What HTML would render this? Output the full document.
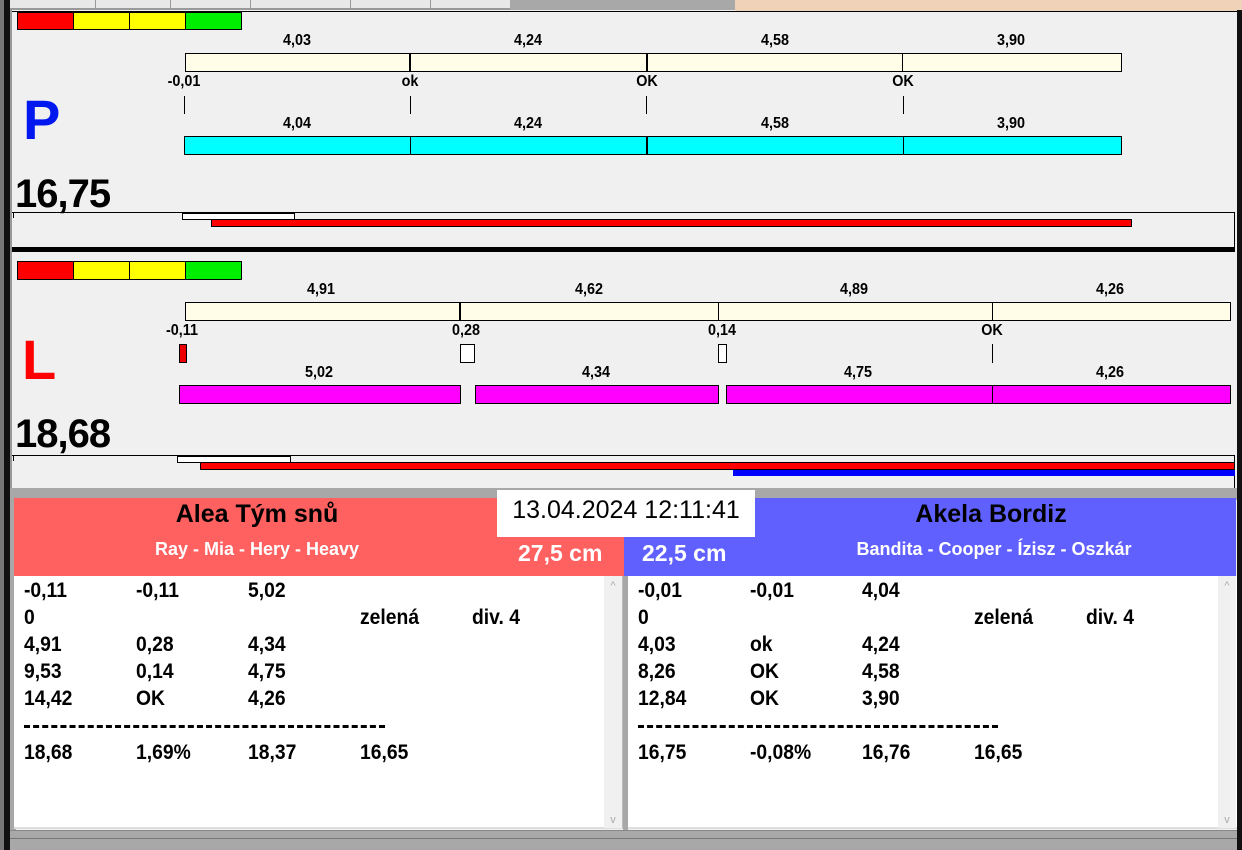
<!DOCTYPE html>
<html><head><meta charset="utf-8"><style>
*{margin:0;padding:0;box-sizing:border-box}
body{width:1242px;height:850px;overflow:hidden;background:#f0f0f0;position:relative;font-family:"Liberation Sans",Arial,sans-serif;font-weight:bold}
.a{position:absolute}
.lb{position:absolute;font-size:16px;transform:translateX(-50%) scaleX(0.9);white-space:nowrap;line-height:15px}
.bx{position:absolute;border:1px solid #000}
.t{position:absolute;font-size:21px;line-height:24px;white-space:nowrap;transform:scaleX(0.92);transform-origin:0 0}
</style></head><body>
<div class="a" style="left:0;top:0;width:510px;height:10px;background:#e8e8e8;border-bottom:2px solid #999"></div>
<div class="a" style="left:95px;top:0;width:1px;height:8px;background:#999"></div>
<div class="a" style="left:170px;top:0;width:1px;height:8px;background:#999"></div>
<div class="a" style="left:250px;top:0;width:1px;height:8px;background:#999"></div>
<div class="a" style="left:350px;top:0;width:1px;height:8px;background:#999"></div>
<div class="a" style="left:430px;top:0;width:1px;height:8px;background:#999"></div>
<div class="a" style="left:510px;top:0;width:225px;height:10px;background:#a8a8a8"></div>
<div class="a" style="left:735px;top:0;width:507px;height:12px;background:#f0d2b8"></div>
<div class="a" style="left:0;top:0;width:4px;height:850px;background:#777"></div>
<div class="a" style="left:4px;top:0;width:6px;height:850px;background:#111"></div>
<div class="a" style="left:10px;top:10px;width:2px;height:480px;background:#999"></div>
<div class="a" style="left:1237px;top:10px;width:5px;height:840px;background:#111"></div>

<div class="a" style="left:12px;top:11px;width:1225px;height:1px;background:#000"></div>
<div class="bx" style="left:17px;top:12px;width:57px;height:18px;background:#f00"></div>
<div class="bx" style="left:73px;top:12px;width:57px;height:18px;background:#ff0"></div>
<div class="bx" style="left:129px;top:12px;width:57px;height:18px;background:#ff0"></div>
<div class="bx" style="left:185px;top:12px;width:57px;height:18px;background:#0e0"></div>

<div class="lb" style="left:297px;top:33px">4,03</div>
<div class="lb" style="left:528px;top:33px">4,24</div>
<div class="lb" style="left:775px;top:33px">4,58</div>
<div class="lb" style="left:1011px;top:33px">3,90</div>
<div class="bx" style="left:185px;top:53px;width:937px;height:19px;background:#fffde8"></div>
<div class="a" style="left:409px;top:53px;width:2px;height:19px;background:#000"></div>
<div class="a" style="left:646px;top:53px;width:2px;height:19px;background:#000"></div>
<div class="a" style="left:902px;top:53px;width:1px;height:19px;background:#000"></div>
<div class="lb" style="left:184px;top:74px">-0,01</div>
<div class="lb" style="left:410px;top:74px">ok</div>
<div class="lb" style="left:647px;top:74px">OK</div>
<div class="lb" style="left:903px;top:74px">OK</div>
<div class="a" style="left:184px;top:96px;width:1px;height:18px;background:#000"></div>
<div class="a" style="left:410px;top:96px;width:1px;height:18px;background:#000"></div>
<div class="a" style="left:646px;top:96px;width:1px;height:18px;background:#000"></div>
<div class="a" style="left:903px;top:96px;width:1px;height:18px;background:#000"></div>
<div class="lb" style="left:297px;top:116px">4,04</div>
<div class="lb" style="left:528px;top:116px">4,24</div>
<div class="lb" style="left:775px;top:116px">4,58</div>
<div class="lb" style="left:1011px;top:116px">3,90</div>
<div class="bx" style="left:184px;top:136px;width:938px;height:19px;background:#0ff"></div>
<div class="a" style="left:410px;top:136px;width:1px;height:19px;background:#000"></div>
<div class="a" style="left:646px;top:136px;width:2px;height:19px;background:#000"></div>
<div class="a" style="left:903px;top:136px;width:1px;height:19px;background:#000"></div>
<div class="a" style="left:23px;top:90px;font-size:56px;color:#0018f0;line-height:60px">P</div>
<div class="a" style="left:15px;top:172px;font-size:40px;line-height:44px;letter-spacing:-1px">16,75</div>
<div class="a" style="left:12px;top:212px;width:1223px;height:36px;border-top:1px solid #000;border-right:1px solid #000"></div>
<div class="a" style="left:13px;top:212px;width:1px;height:6px;background:#000"></div>
<div class="bx" style="left:182px;top:213px;width:113px;height:7px;background:#fff"></div>
<div class="bx" style="left:211px;top:219px;width:921px;height:8px;background:#f00"></div>
<div class="a" style="left:12px;top:247px;width:1223px;height:5px;background:#000"></div>

<div class="bx" style="left:17px;top:261px;width:57px;height:19px;background:#f00"></div>
<div class="bx" style="left:73px;top:261px;width:57px;height:19px;background:#ff0"></div>
<div class="bx" style="left:129px;top:261px;width:57px;height:19px;background:#ff0"></div>
<div class="bx" style="left:185px;top:261px;width:57px;height:19px;background:#0e0"></div>
<div class="lb" style="left:321px;top:282px">4,91</div>
<div class="lb" style="left:589px;top:282px">4,62</div>
<div class="lb" style="left:854px;top:282px">4,89</div>
<div class="lb" style="left:1110px;top:282px">4,26</div>
<div class="bx" style="left:185px;top:302px;width:1046px;height:19px;background:#fffde8"></div>
<div class="a" style="left:459px;top:302px;width:2px;height:19px;background:#000"></div>
<div class="a" style="left:718px;top:302px;width:1px;height:19px;background:#000"></div>
<div class="a" style="left:992px;top:302px;width:1px;height:19px;background:#000"></div>
<div class="lb" style="left:182px;top:323px">-0,11</div>
<div class="lb" style="left:466px;top:323px">0,28</div>
<div class="lb" style="left:722px;top:323px">0,14</div>
<div class="lb" style="left:992px;top:323px">OK</div>
<div class="bx" style="left:179px;top:344px;width:8px;height:19px;background:#e00"></div>
<div class="bx" style="left:460px;top:344px;width:15px;height:19px;background:#fff"></div>
<div class="bx" style="left:718px;top:344px;width:9px;height:19px;background:#fff"></div>
<div class="a" style="left:992px;top:344px;width:1px;height:19px;background:#000"></div>
<div class="lb" style="left:319px;top:365px">5,02</div>
<div class="lb" style="left:596px;top:365px">4,34</div>
<div class="lb" style="left:858px;top:365px">4,75</div>
<div class="lb" style="left:1110px;top:365px">4,26</div>
<div class="bx" style="left:179px;top:385px;width:282px;height:19px;background:#f0f"></div>
<div class="bx" style="left:475px;top:385px;width:244px;height:19px;background:#f0f"></div>
<div class="bx" style="left:726px;top:385px;width:505px;height:19px;background:#f0f"></div>
<div class="a" style="left:992px;top:385px;width:1px;height:19px;background:#000"></div>
<div class="a" style="left:22px;top:330px;font-size:56px;color:#f00;line-height:60px">L</div>
<div class="a" style="left:15px;top:412px;font-size:40px;line-height:44px;letter-spacing:-1px">18,68</div>
<div class="a" style="left:12px;top:455px;width:1223px;height:33px;border-top:1px solid #000;border-right:1px solid #000"></div>
<div class="a" style="left:13px;top:455px;width:1px;height:6px;background:#000"></div>
<div class="bx" style="left:177px;top:456px;width:114px;height:7px;background:#fff"></div>
<div class="bx" style="left:200px;top:462px;width:1035px;height:8px;background:#f00"></div>
<div class="a" style="left:733px;top:469px;width:502px;height:7px;background:#00f;border-top:1px solid #000"></div>

<div class="a" style="left:10px;top:488px;width:1227px;height:12px;background:#a8a8a8"></div>
<div class="a" style="left:10px;top:496px;width:6px;height:354px;background:#a8a8a8"></div>
<div class="a" style="left:14px;top:498px;width:610px;height:78px;background:#ff6060"></div>
<div class="a" style="left:624px;top:498px;width:612px;height:78px;background:#6060ff"></div>
<div class="a" style="left:497px;top:490px;width:258px;height:47px;background:#fff;font-weight:normal;font-size:25px;line-height:40px;text-align:center">13.04.2024 12:11:41</div>
<div class="a" style="left:14px;top:499px;width:486px;text-align:center;font-size:25px;line-height:30px">Alea Tým snů</div>
<div class="a" style="left:14px;top:538px;width:486px;text-align:center;font-size:18px;line-height:22px;color:#fff">Ray - Mia - Hery - Heavy</div>
<div class="a" style="left:518px;top:539px;font-size:23px;line-height:28px;color:#fff">27,5 cm</div>
<div class="a" style="left:642px;top:539px;font-size:23px;line-height:28px;color:#fff">22,5 cm</div>
<div class="a" style="left:755px;top:499px;width:472px;text-align:center;font-size:25px;line-height:30px">Akela Bordiz</div>
<div class="a" style="left:755px;top:538px;width:478px;text-align:center;font-size:18px;line-height:22px;color:#fff">Bandita - Cooper - Ízisz - Oszkár</div>

<div class="a" style="left:14px;top:576px;width:609px;height:253px;background:#fff;border-right:1px solid #bbb;border-bottom:2px solid #ddd"></div>
<div class="a" style="left:604px;top:576px;width:18px;height:252px;background:#f0f0f0;color:#aaa;font-size:11px;text-align:center;font-weight:normal"><div style="margin-top:4px">^</div><div style="position:absolute;bottom:2px;width:18px">v</div></div>
<div class="a" style="left:623px;top:576px;width:5px;height:254px;background:#a8a8a8"></div>
<div class="a" style="left:628px;top:576px;width:609px;height:253px;background:#fff;border-bottom:2px solid #ddd"></div>
<div class="a" style="left:1218px;top:576px;width:18px;height:252px;background:#f0f0f0;color:#aaa;font-size:11px;text-align:center;font-weight:normal"><div style="margin-top:4px">^</div><div style="position:absolute;bottom:2px;width:18px">v</div></div>
<div class="a" style="left:10px;top:830px;width:1227px;height:20px;background:#a8a8a8;border-top:1px solid #888"></div>
<div class="a" style="left:10px;top:838px;width:1227px;height:1px;background:#777"></div>

<div class="t" style="left:24px;top:579px">-0,11</div><div class="t" style="left:136px;top:579px">-0,11</div><div class="t" style="left:248px;top:579px">5,02</div>
<div class="t" style="left:24px;top:606px">0</div><div class="t" style="left:360px;top:606px">zelená</div><div class="t" style="left:472px;top:606px">div. 4</div>
<div class="t" style="left:24px;top:633px">4,91</div><div class="t" style="left:136px;top:633px">0,28</div><div class="t" style="left:248px;top:633px">4,34</div>
<div class="t" style="left:24px;top:660px">9,53</div><div class="t" style="left:136px;top:660px">0,14</div><div class="t" style="left:248px;top:660px">4,75</div>
<div class="t" style="left:24px;top:687px">14,42</div><div class="t" style="left:136px;top:687px">OK</div><div class="t" style="left:248px;top:687px">4,26</div>
<div class="a" style="left:24px;top:725px;width:361px;height:0;border-top:3px dashed #000"></div>
<div class="t" style="left:24px;top:741px">18,68</div><div class="t" style="left:136px;top:741px">1,69%</div><div class="t" style="left:248px;top:741px">18,37</div><div class="t" style="left:360px;top:741px">16,65</div>
<div class="t" style="left:638px;top:579px">-0,01</div><div class="t" style="left:750px;top:579px">-0,01</div><div class="t" style="left:862px;top:579px">4,04</div>
<div class="t" style="left:638px;top:606px">0</div><div class="t" style="left:974px;top:606px">zelená</div><div class="t" style="left:1086px;top:606px">div. 4</div>
<div class="t" style="left:638px;top:633px">4,03</div><div class="t" style="left:750px;top:633px">ok</div><div class="t" style="left:862px;top:633px">4,24</div>
<div class="t" style="left:638px;top:660px">8,26</div><div class="t" style="left:750px;top:660px">OK</div><div class="t" style="left:862px;top:660px">4,58</div>
<div class="t" style="left:638px;top:687px">12,84</div><div class="t" style="left:750px;top:687px">OK</div><div class="t" style="left:862px;top:687px">3,90</div>
<div class="a" style="left:638px;top:725px;width:360px;height:0;border-top:3px dashed #000"></div>
<div class="t" style="left:638px;top:741px">16,75</div><div class="t" style="left:750px;top:741px">-0,08%</div><div class="t" style="left:862px;top:741px">16,76</div><div class="t" style="left:974px;top:741px">16,65</div>
</body></html>
